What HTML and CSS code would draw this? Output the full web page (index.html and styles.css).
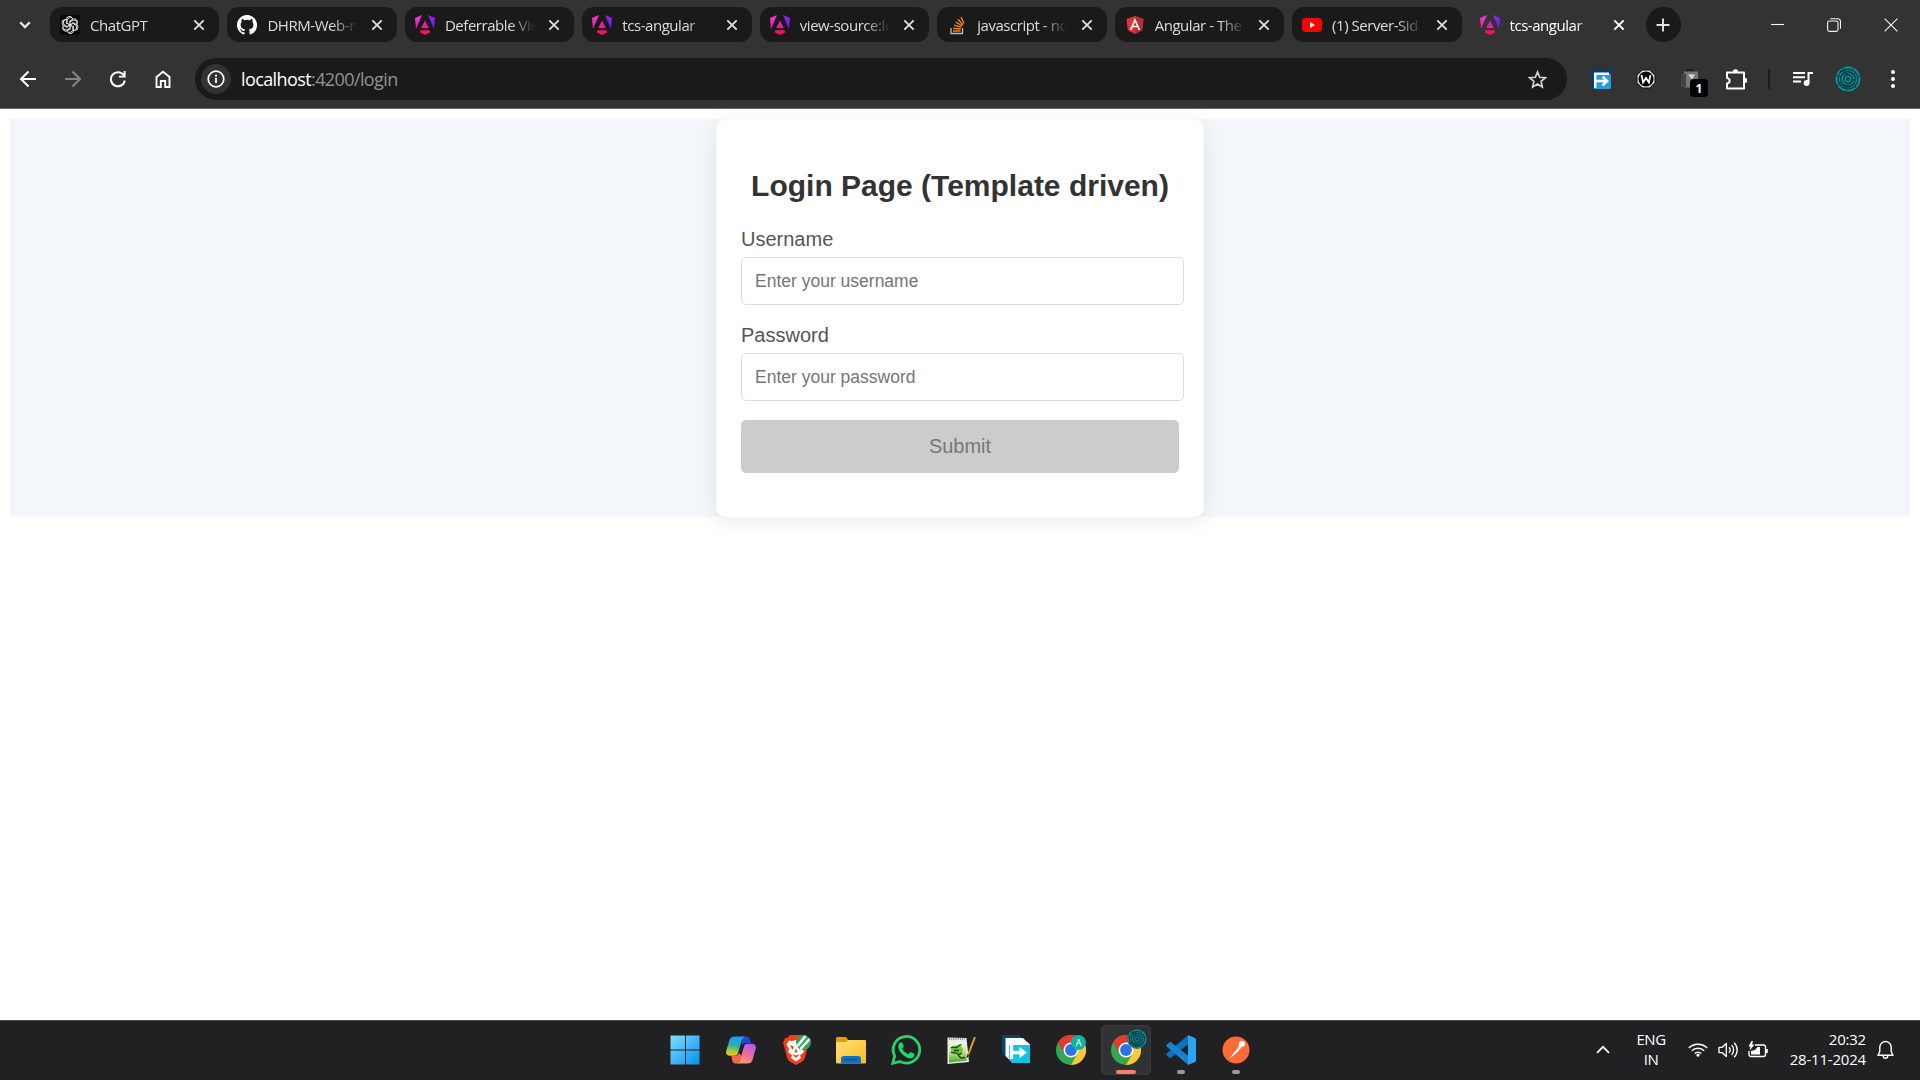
FILE: index.html
```html
<!DOCTYPE html>
<html lang="en">
<head>
<meta charset="utf-8">
<title>tcs-angular</title>
<link rel="stylesheet" href="styles.css">
</head>
<body>
<svg class="defs" aria-hidden="true">
  <defs>
    <linearGradient id="ngPink" x1="0" y1="0" x2="0" y2="1"><stop offset="0" stop-color="#f637d8"/><stop offset="1" stop-color="#e81a9c"/></linearGradient>
    <linearGradient id="ngViolet" x1="0" y1="0" x2="0" y2="1"><stop offset="0" stop-color="#8a2be8"/><stop offset="1" stop-color="#6e10ff"/></linearGradient>
    <linearGradient id="winBlue" x1="0" y1="0" x2="1" y2="1"><stop offset="0" stop-color="#7fe0fd"/><stop offset="1" stop-color="#0a8df0"/></linearGradient>
    <linearGradient id="coBlue" x1="0.4" y1="0" x2="0.2" y2="1"><stop offset="0" stop-color="#1f9df0"/><stop offset=".45" stop-color="#27b3a8"/><stop offset=".75" stop-color="#a8cc3a"/><stop offset="1" stop-color="#f3c41c"/></linearGradient>
    <linearGradient id="coPink" x1="0.8" y1="0" x2="0.3" y2="1"><stop offset="0" stop-color="#a85cf0"/><stop offset=".5" stop-color="#e86aa8"/><stop offset="1" stop-color="#ff9f5c"/></linearGradient>
    <linearGradient id="folder" x1="0" y1="0" x2="1" y2="1"><stop offset="0" stop-color="#ffe07a"/><stop offset="1" stop-color="#fbbd20"/></linearGradient>
    <linearGradient id="npp" x1="0" y1="0" x2="0" y2="1"><stop offset="0" stop-color="#f4f8e8"/><stop offset=".45" stop-color="#c8e8a0"/><stop offset="1" stop-color="#4fa827"/></linearGradient>
    <symbol id="angular" viewBox="0 0 20 20">
      <path d="M7 0 0 3l1 11z" fill="url(#ngPink)"/><path d="m13 0 7 3-1 11z" fill="url(#ngViolet)"/>
      <path d="m10 5.400 3.700 7.600h-2.200L10 10 8.500 13H6.300z" fill="#e520a5"/><path d="M7.500 10.500h5l1 2.500h-7z" fill="#e520a5"/>
      <path d="M5.500 15.200h9l.8 2L10 20l-5.300-2.800z" fill="#f8125c"/>
    </symbol>
    <symbol id="close" viewBox="0 0 12 12"><path d="m1.300 1.300 9.400 9.400m0-9.400-9.400 9.400" stroke="currentColor" stroke-width="1.900" fill="none"/></symbol>
    <symbol id="chrome" viewBox="0 0 30 30">
      <circle cx="15" cy="15" r="15" fill="#35a652"/>
      <path d="M2 7.500A15 15 0 0 1 28 7.500H15L8.500 18.800z" fill="#e23b2e"/>
      <path d="M28 7.500A15 15 0 0 1 15 30L21.500 18.700 15 7.500z" fill="#fcc934"/>
      <circle cx="15" cy="15" r="7.500" fill="#fff"/><circle cx="15" cy="15" r="5.900" fill="#2d73e8"/>
    </symbol>
    <symbol id="avatar" viewBox="0 0 26 26">
      <circle cx="13" cy="13" r="12.700" fill="#06464d"/>
      <g fill="none" stroke="#0f969f">
        <circle cx="13" cy="13" r="11.600" stroke-width="1.600" stroke-dasharray="9 1"/>
        <circle cx="13" cy="13" r="8.600" stroke-width="1.300" stroke="#0d8890" stroke-dasharray="5 1"/>
        <circle cx="13" cy="13" r="5.800" stroke-width="1.300"/>
        <circle cx="13" cy="13" r="2.600" stroke-width="1.100"/>
      </g>
      <path d="M5 5c6-1 12 1 15 6M5 18c4 3 11 1 14-5M7 9c3-2 7-2 9 1M8 21c4 1 8 0 11-3" fill="none" stroke="#04272c" stroke-width=".8"/>
    </symbol>
  </defs>
</svg>

<header class="browser">
  <div class="tabstrip">
    <button class="tab-search" aria-label="Search tabs"><svg width="12" height="8" viewBox="0 0 12 8"><path d="m1.200 1.300 4.800 4.800 4.800-4.800" stroke="#e8e8e8" stroke-width="2.300" fill="none"/></svg></button>
    <div class="tabs">
      <div class="tab">
        <svg class="favicon" viewBox="0 0 20 20"><rect width="20" height="20" rx="3" fill="#080808"/><g fill="none" stroke="#e0e0e0" stroke-width=".95"><path id="petal" d="M7.200 8.400V5.900a3.300 3.300 0 0 1 6-1.900M7.200 8.400l5.100 3M8.900 6.500 12.800 4.200a3.100 3.100 0 0 1 4.400 3.900"/><use href="#petal" transform="rotate(60 10 10)"/><use href="#petal" transform="rotate(120 10 10)"/><use href="#petal" transform="rotate(180 10 10)"/><use href="#petal" transform="rotate(240 10 10)"/><use href="#petal" transform="rotate(300 10 10)"/></g></svg>
        <span class="title">ChatGPT</span><svg class="x"><use href="#close"/></svg>
      </div>
      <div class="tab">
        <svg class="favicon" viewBox="0 0 16 16"><path fill="#fff" d="M8 0C3.580 0 0 3.580 0 8c0 3.540 2.290 6.530 5.470 7.590.4.070.55-.17.55-.38v-1.490c-2.010.37-2.530-.49-2.690-.94-.09-.23-.48-.94-.82-1.130-.28-.15-.68-.52-.01-.53.63-.01 1.080.58 1.230.82.72 1.210 1.870.87 2.330.66.07-.52.28-.87.51-1.070-1.780-.2-3.640-.89-3.640-3.950 0-.87.31-1.590.82-2.150-.08-.2-.36-1.020.08-2.120 0 0 .67-.21 2.200.82a7.700 7.700 0 0 1 4 0c1.530-1.040 2.200-.82 2.200-.82.44 1.100.16 1.920.08 2.120.51.56.82 1.270.82 2.150 0 3.070-1.870 3.750-3.650 3.950.29.25.54.73.54 1.480v2.200c0 .21.15.46.55.38A8 8 0 0 0 16 8c0-4.420-3.580-8-8-8z"/></svg>
        <span class="title">DHRM-Web-r</span><svg class="x"><use href="#close"/></svg>
      </div>
      <div class="tab"><svg class="favicon"><use href="#angular"/></svg><span class="title">Deferrable Vie</span><svg class="x"><use href="#close"/></svg></div>
      <div class="tab"><svg class="favicon"><use href="#angular"/></svg><span class="title">tcs-angular</span><svg class="x"><use href="#close"/></svg></div>
      <div class="tab"><svg class="favicon"><use href="#angular"/></svg><span class="title">view-source:lo</span><svg class="x"><use href="#close"/></svg></div>
      <div class="tab">
        <svg class="favicon" viewBox="0 0 20 20"><path d="M4 13v5.500h11.500V13" stroke="#b9bcc0" stroke-width="1.300" fill="none"/><path d="M6 16h7.500M6.200 13.200l7.500.8M7 10.200l7.200 2M8.700 7l6.400 3.800M11 4.200l5 5.700M14.100 2l2.900 6.500" stroke="#f48024" stroke-width="1.400" fill="none"/></svg>
        <span class="title">javascript - no</span><svg class="x"><use href="#close"/></svg>
      </div>
      <div class="tab">
        <svg class="favicon" viewBox="0 0 20 20"><path d="m10 1 8.500 3-1.300 11.200L10 19l-7.200-3.800L1.500 4z" fill="#e23237"/><path d="m10 1 8.500 3-1.300 11.200L10 19z" fill="#b52e31"/><path d="M10 3 4.700 15h2l1-2.700h4.600l1 2.700h2zm0 4 1.700 3.800H8.300z" fill="#fff"/></svg>
        <span class="title">Angular - The</span><svg class="x"><use href="#close"/></svg>
      </div>
      <div class="tab">
        <svg class="favicon" viewBox="0 0 20 20"><rect y="3" width="20" height="14" rx="3.500" fill="#f00"/><path d="m8 7 5 3-5 3z" fill="#fff"/></svg>
        <span class="title">(1) Server-Sid</span><svg class="x"><use href="#close"/></svg>
      </div>
      <div class="tab active"><svg class="favicon"><use href="#angular"/></svg><span class="title">tcs-angular</span><svg class="x"><use href="#close"/></svg></div>
    </div>
    <button class="new-tab" aria-label="New tab"><svg width="14" height="14" viewBox="0 0 14 14"><path d="M7 .5v13M.5 7h13" stroke="#e3e3e3" stroke-width="1.900"/></svg></button>
    <div class="window-controls">
      <svg width="13" height="13" viewBox="0 0 13 13"><path d="M0 6.500h13" stroke="#f4f4f4" stroke-width="1.100"/></svg>
      <svg width="14" height="14" viewBox="0 0 14 14" fill="none" stroke="#f4f4f4" stroke-width="1.100"><rect x=".6" y="3" width="10.400" height="10.400" rx="1.800"/><path d="M3.200 .7h7.300a3 3 0 0 1 3 3v7"/></svg>
      <svg width="14" height="14" viewBox="0 0 14 14"><path d="m.6.600 12.800 12.800m0-12.800L.6 13.400" stroke="#f4f4f4" stroke-width="1.100"/></svg>
    </div>
  </div>

  <div class="toolbar">
    <nav class="nav">
      <svg viewBox="0 0 18 18"><path d="M17 9H2m7.500-7.500L2 9l7.500 7.500" stroke="#fff" stroke-width="2" fill="none"/></svg>
      <svg viewBox="0 0 18 18"><path d="M1 9h15M8.500 1.500 16 9l-7.500 7.500" stroke="#858585" stroke-width="2" fill="none"/></svg>
      <svg viewBox="0 0 18 18"><path d="M14.900 5.600A7 7 0 1 0 15.800 10.500" stroke="#fff" stroke-width="2" fill="none"/><path d="M16.600.9v6.700H9.900V5.700h4.800V.9z" fill="#fff"/></svg>
      <svg viewBox="0 0 18 18"><path d="M2.500 6.900 9 1.700l6.500 5.200V17h-4.300v-6H6.800v6H2.500z" stroke="#fff" stroke-width="1.900" fill="none"/></svg>
    </nav>
    <div class="omnibox">
      <span class="site-info"><svg width="18" height="18" viewBox="0 0 18 18"><circle cx="9" cy="9" r="7.800" stroke="#fff" stroke-width="1.700" fill="none"/><path d="M9 8v5M9 4.800v1.900" stroke="#fff" stroke-width="1.800"/></svg></span>
      <span class="url"><b>localhost</b>:4200/login</span>
      <svg class="star" width="19" height="19" viewBox="0 0 19 19"><path d="m9.500 1.900 2.200 5.300 5.700.5-4.300 3.700 1.300 5.600-4.900-3-4.900 3 1.300-5.600L1.600 7.700l5.700-.5z" stroke="#d5d5d5" stroke-width="1.600" fill="none"/></svg>
    </div>
    <div class="extensions">
      <svg width="20" height="20" viewBox="0 0 20 20"><path d="M0 1.500A1.500 1.500 0 0 1 1.500 0H18.500A1.500 1.500 0 0 1 20 1.500V20H4l-4-2z" fill="#073a70"/><path d="M3 4h15l2 1.500v13a1.500 1.500 0 0 1-1.500 1.500H3z" fill="#259be0"/><path d="M4.200 19V4.700H18M4.200 12H14M11.500 7.700l4.600 4.300-4.600 4.300" stroke="#fff" stroke-width="2.500" fill="none"/></svg>
      <svg width="20" height="20" viewBox="0 0 20 20"><path d="m6.300 1h7.400L19 6.300v7.400L13.700 19H6.300L1 13.700V6.300z" fill="#e8e8e8" stroke="#080808"/><circle cx="10" cy="10" r="7.600" fill="#070707"/><path d="m5.500 6 1.600 7.500L10 9l2.900 4.500L14.500 6" stroke="#fff" stroke-width="1.800" fill="none"/></svg>
      <div class="badged">
        <svg width="19" height="20" viewBox="0 0 19 20"><path d="M6 3V1h6v2" stroke="#1c1c1c" stroke-width="1.400" fill="none"/><rect x="3" y="2.500" width="14" height="16" fill="#777"/><rect y="5" width="5" height="13" fill="#444"/><path d="M7 5.500h7l-3 5z" fill="#ddd"/></svg>
        <span class="badge">1</span>
      </div>
      <svg width="22" height="22" viewBox="0 0 22 22"><path d="M2 4.500h17v16H2v-5c3.500-.5 3.500-5 0-5.500z" stroke="#fff" stroke-width="2" stroke-linejoin="round" fill="none"/><path d="M7.800 4a2.700 2.700 0 0 1 5.400 0zM19.500 9.800a2.700 2.700 0 0 1 0 5.400z" fill="#fff"/></svg>
    </div>
    <i class="divider"></i>
    <div class="profile">
      <svg width="20" height="16" viewBox="0 0 20 16"><path d="M0 2h12M0 6.300h12M0 10.600h8" stroke="#fff" stroke-width="2"/><path d="M20 2h-4.500v9.500" stroke="#fff" stroke-width="2" fill="none"/><circle cx="13.600" cy="12" r="2.900" fill="#fff"/></svg>
      <svg width="26" height="26"><use href="#avatar"/></svg>
      <svg width="4" height="18" viewBox="0 0 4 18" fill="#fff"><circle cx="2" cy="2" r="2"/><circle cx="2" cy="9" r="2"/><circle cx="2" cy="16" r="2"/></svg>
    </div>
  </div>
</header>

<main class="page">
  <section class="login-bg">
    <form class="card">
      <h2>Login Page (Template driven)</h2>
      <div class="field"><label for="user">Username</label><input id="user" type="text" placeholder="Enter your username"></div>
      <div class="field"><label for="pass">Password</label><input id="pass" type="password" placeholder="Enter your password"></div>
      <button class="submit" type="submit" disabled>Submit</button>
    </form>
  </section>
</main>

<footer class="taskbar">
  <div class="apps">
    <div class="app"><svg viewBox="0 0 30 30"><path d="M.5.500H15v14H.5zM16 .5h13.500v14H16zM.5 15.500H15v14H.5zM16 15.500h13.500v14H16z" fill="url(#winBlue)"/></svg></div>
    <div class="app"><svg viewBox="0 0 30 30"><path d="M16 1.500h4.500c2 0 3 1.500 3.600 4L25 8h-5c-2.500 0-3.500 1-4 3z" fill="#2148cf"/><path d="M9 1.500h10c-2.500 1-3 3-3.800 6L12 18c-.7 2-1.500 2.700-3.500 2.700H4c-3 0-4.500-2-3.700-5L3.500 5C4.300 2.500 6 1.500 9 1.500z" fill="url(#coBlue)"/><path d="M21 28.500H11c2.500-1 3-3 3.800-6L18 11.500c.7-2 1.500-2.700 3.500-2.700H26c3 0 4.500 2 3.700 5L26.500 25c-.8 2.500-2.500 3.500-5.500 3.500z" fill="url(#coPink)"/><path d="M13 28.500H9.500c-2 0-3-1.500-3.500-4l-.7-3.800h4c2.200 0 3-1 3.700-3l2.400 3-.7 3c-.5 2.500-.7 3.800-1.700 4.800z" fill="#f4644e"/></svg></div>
    <div class="app"><svg viewBox="0 0 30 30"><path d="M9 0h12l2.500 2.700L26 3l2 5-1.200 3.500-3 11.500c-.5 1.700-1.500 2.700-3 3.800L15 30l-5.800-3.200c-1.500-1.100-2.500-2.100-3-3.800l-3-11.500L2 8l2-5 2.500-.3z" fill="#f83c13"/><path d="m15 5 4 1 3-.5 2.500 4-2.500 4.500 1 3-4 3.500 1 2.500-5 3.500-5-3.500 1-2.500L7 17l1-3-2.500-4.500 2.500-4L11 6z" fill="#fff"/><path d="m9 10 3.800 1.500L11.500 15zM21 10l-3.800 1.500 1.300 3.500zM15 13l1.500 4.500h-3zM11 19l4 1.500 4-1.500-4 4z" fill="#f83c13"/><circle cx="22.500" cy="7.500" r="7.500" fill="#32a35f"/><path d="m16.500 11 8-10M19.500 14l9-10" stroke="#fff" stroke-width="2.600"/></svg></div>
    <div class="app"><svg viewBox="0 0 30 30"><path d="M0 9V3.500C0 2.600.6 2 1.500 2H9c1.500 0 2 .7 3 3h16.500c.9 0 1.500.6 1.500 1.500V12H0z" fill="#dea000"/><path d="M0 8.500C0 7.500.6 7 1.500 7h8L12 5h16.500c.9 0 1.500.6 1.500 1.500V27c0 1-.5 1.500-1.500 1.500h-27C.5 28.500 0 28 0 27z" fill="url(#folder)"/><path d="M5 28.500V24a3 3 0 0 1 3-3h14a3 3 0 0 1 3 3v4.500z" fill="#1272c2"/><path d="M8.500 24.700h13" stroke="#094c91" stroke-width="1.200"/></svg></div>
    <div class="app"><svg viewBox="0 0 30 30"><path d="m1.700 28.300 2-7.300A13.300 13.300 0 1 1 9 26.400z" fill="none" stroke="#25d366" stroke-width="2.800"/><path d="M10.200 7.300c.8 0 1.100.2 1.400.9l1.100 2.700c.2.500 0 1-.5 1.500l-1 1.200c1.500 2.800 3.500 4.500 6.200 5.700l1.400-1.700c.4-.5.8-.5 1.300-.3l2.800 1.300c.6.300.8.500.7 1.200-.2 2.500-2.300 3.800-4.400 3.700-5.600-.5-11.700-6.700-12-11.400-.1-2.400 1.300-4.700 3-4.800z" fill="#25d366"/></svg></div>
    <div class="app"><svg viewBox="0 0 30 30"><path d="M1.500 2.500 20.500 3l2.500 24-21.500 2z" fill="#e9ebe7"/><path d="m3 7 16.500-.5L21 25.800 3 27.500z" fill="url(#npp)"/><path d="M3 4h16" stroke="#777" stroke-width="1.600" stroke-dasharray="1 1.200"/><ellipse cx="11" cy="15" rx="6" ry="4.500" fill="#6cc93a"/><path d="M5 13c2-2 3 0 5-.5s3-3 5.500-2.500M5 17c2 2 5 0 6 1.500s3 1 5-.5M8 15.500h5M12 20l3 3 4-.5" stroke="#263d1c" stroke-width="1.300" fill="none"/><path d="m29 2-7 18" stroke="#e49b24" stroke-width="2"/><path d="m22.200 19.500-1.200 3" stroke="#222" stroke-width="1.400"/></svg></div>
    <div class="app"><svg viewBox="0 0 30 30"><path d="M1 0h17l4.500 4H5v18l-4-4z" fill="#0a416d"/><path d="M4.500 3H22l7 7v18H11.500l-7-7z" fill="#f4fcff"/><path d="M8 10h21v18H12l-4-3.500z" fill="#10c5e3"/><path d="M8 10h21v-.3l-2.700-2.700H8z" fill="#fff"/><path d="M10.500 10v14M10.500 17.500h10" stroke="#fff" stroke-width="3.300" fill="none"/><path d="m18.500 12 7.500 5.500-7.500 5.500z" fill="#fff"/></svg></div>
    <div class="app"><svg viewBox="0 0 30 30"><use href="#chrome"/></svg><span class="letter">A</span></div>
    <div class="app current"><svg viewBox="0 0 30 30"><use href="#chrome"/></svg><svg class="mini"><use href="#avatar"/></svg></div>
    <div class="app running"><svg viewBox="0 0 30 30"><path d="m22 .2 1 8.200L5 22.700c-.5.400-1 .4-1.500 0L.6 20.200c-.6-.5-.6-1.200 0-1.700z" fill="#0d72bd"/><path d="M22 29.800 23 21.600 5 7.300c-.5-.4-1-.4-1.500 0L.6 9.800c-.6.500-.6 1.200 0 1.700z" fill="#1583cf"/><path d="m22 0 7 3c.6.300 1 .8 1 1.500v21c0 .7-.4 1.200-1 1.500l-7 3z" fill="#2aa3f0"/></svg></div>
    <div class="app running"><svg viewBox="0 0 30 30"><circle cx="15" cy="15" r="13.500" fill="#ff6c37"/><circle cx="21" cy="8.700" r="3" fill="#fff"/><path d="m18.500 9.500 2.300 2.500-5.800 6.500-7 5.500 5.500-7z" fill="#fff"/><path d="m11 18.500 7-6.500" stroke="#f0875f" stroke-width="1"/></svg></div>
  </div>
  <div class="tray">
    <svg class="caret" width="14" height="9" viewBox="0 0 14 9"><path d="m1 7.800 6-6 6 6" stroke="#fff" stroke-width="1.700" fill="none"/></svg>
    <div class="lang">ENG<br>IN</div>
    <div class="status">
      <svg width="20" height="15" viewBox="0 0 20 15"><path d="M.8 6a12.900 12.900 0 0 1 18.400 0M3.800 8.800a8.800 8.800 0 0 1 12.400 0M6.700 11.500a4.700 4.700 0 0 1 6.600 0" stroke="#fff" stroke-width="1.500" fill="none"/><circle cx="10" cy="13.100" r="1.700" fill="#fff"/></svg>
      <svg width="20" height="18" viewBox="0 0 20 18" stroke="#fff" stroke-width="1.300" fill="none"><path d="M1 6.300h3.200L8.300 2.500v13L4.200 11.700H1z" stroke-linejoin="round"/><path d="M11 6.300a4 4 0 0 1 0 5.400M13.600 4a7.300 7.300 0 0 1 0 10M16.200 1.700a10.500 10.500 0 0 1 0 14.600"/></svg>
      <svg width="20" height="18" viewBox="0 0 20 18"><path d="M7 4h8.500a2 2 0 0 1 2 2v7.500a2 2 0 0 1-2 2H3a2 2 0 0 1-2-2V10" stroke="#fff" stroke-width="1.400" fill="none"/><path d="M18 8h1.800v4H18zM3 13.600V10l4-1 2.500-3H12v7.600zM3.500 0 .5 5.500h2L1.700 9.500l4.800-6H4L5 0z" fill="#fff"/></svg>
    </div>
    <div class="clock">20:32<br>28-11-2024</div>
    <svg class="bell" width="17" height="20" viewBox="0 0 17 20"><path d="M8.500 1.500a5.700 5.700 0 0 0-5.700 5.700v4.300L1 15.300h15l-1.800-3.800V7.200a5.700 5.700 0 0 0-5.700-5.700zM6.300 16a2.200 2.200 0 0 0 4.400 0" stroke="#fff" stroke-width="1.400" stroke-linejoin="round" fill="none"/></svg>
  </div>
</footer>
</body>
</html>
```
FILE: styles.css
```css
* { box-sizing: border-box; }
body {
  margin: 0;
  height: 1080px;
  display: flex;
  flex-direction: column;
  overflow: hidden;
  background: #fff;
  font-family: "Liberation Sans", Arial, sans-serif;
}
.defs { position: absolute; width: 0; height: 0; }
svg { display: block; flex: none; }
button { border: 0; padding: 0; font: inherit; }

/* Browser chrome */
.browser {
  height: 109px;
  flex: none;
  background: #333;
  border-bottom: 1px solid #6a6868;
  font-family: "Open Sans", "Noto Sans", sans-serif;
}
.tabstrip { display: flex; height: 50px; padding-top: 7px; }
.tab-search { width: 50px; height: 35px; background: none; display: flex; align-items: center; justify-content: center; }
.tabs { display: flex; gap: 8px; }
.tab {
  width: 169.450px;
  height: 35px;
  padding: 0 14px 0 10px;
  display: flex;
  align-items: center;
  border-radius: 12px;
  background: #1a1a1a;
  color: #dcdcdc;
}
.favicon { width: 20px; height: 20px; margin-right: 10px; }
.title {
  width: 90px;
  white-space: nowrap;
  font-size: 15px;
  letter-spacing: -0.450px;
  line-height: 24px;
  -webkit-mask-image: linear-gradient(90deg, #000 72%, transparent);
  mask-image: linear-gradient(90deg, #000 72%, transparent);
}
.x { width: 12px; height: 12px; margin-left: auto; color: #dedede; }
.tab.active { background: none; color: #fff; }
.active .x { color: #fff; }
.new-tab {
  width: 35px;
  height: 35px;
  margin-left: 7px;
  border-radius: 50%;
  background: #1a1a1a;
  display: flex;
  align-items: center;
  justify-content: center;
}
.window-controls { display: flex; align-items: center; height: 35px; gap: 43px; margin: 0 22px 0 auto; }

.toolbar { display: flex; align-items: center; height: 58px; }
.nav { display: flex; gap: 27px; width: 195px; padding-left: 18.500px; }
.nav svg { width: 18px; height: 18px; }
.omnibox {
  width: 1372px;
  height: 42px;
  padding: 0 20px 0 6px;
  display: flex;
  align-items: center;
  border-radius: 21px;
  background: #1a1a1a;
}
.site-info {
  width: 30px;
  height: 30px;
  border-radius: 50%;
  background: #333;
  display: flex;
  align-items: center;
  justify-content: center;
}
.url { margin-left: 10px; font-size: 18px; letter-spacing: -0.600px; color: #929292; }
.url b { font-weight: 400; color: #fff; }
.star { margin-left: auto; }
.extensions { display: flex; align-items: center; gap: 25px; margin-left: 24px; }
.badged { position: relative; }
.badge {
  position: absolute;
  left: 9px;
  top: 10px;
  width: 18px;
  height: 18px;
  border-radius: 4px;
  background: #000;
  color: #fff;
  font-size: 12px;
  font-weight: 700;
  line-height: 19px;
  text-align: center;
}
.divider { width: 2px; height: 20px; margin-left: 21px; background: #1c1c1c; }
.profile { display: flex; align-items: center; gap: 31px; margin: 0 25px 0 auto; }
.profile svg:nth-child(2) { margin: 0 -1px 0 -9px; }

/* Login page */
.page { flex: 1; padding: 10px; }
.login-bg { height: 398px; display: flex; justify-content: center; background: #f3f7fc; }
.card {
  width: 488px;
  padding: 48px 25px 0;
  border-radius: 10px;
  background: #fff;
  box-shadow: 0 5px 19px rgba(0, 0, 0, .08);
}
.card h2 { margin: 0 0 19px; font-size: 30px; line-height: 38px; text-align: center; color: #333; }
.field { height: 96px; }
.field label { display: block; height: 33px; font-size: 20px; line-height: 31px; color: #555; }
.field input {
  display: block;
  width: 443px;
  height: 48px;
  padding: 0 13px;
  border: 1px solid #ddd;
  border-radius: 5px;
  background: #fff;
  font: 17.500px "Liberation Sans", Arial, sans-serif;
}
.field input::placeholder { color: #757575; }
.submit { display: block; width: 438px; height: 53px; margin-top: 4px; border-radius: 5px; background: #ccc; color: #777; font-size: 20px; }

/* Taskbar */
.taskbar {
  height: 60px;
  flex: none;
  display: flex;
  justify-content: space-between;
  padding-bottom: 2px;
  background: #212124;
  border-top: 1px solid #48494b;
  color: #fff;
  font-family: "Open Sans", "Noto Sans", sans-serif;
}
.apps { display: flex; align-items: center; gap: 5px; margin-left: 659.500px; }
.app { position: relative; width: 50px; height: 50px; display: flex; align-items: center; justify-content: center; border-radius: 5px; }
.app:nth-child(2) { margin-left: 1.500px; }
.app > svg { width: 30px; height: 30px; }
.current { background: #323235; box-shadow: inset 0 0 0 1px #3a3a3d; }
.current::after, .running::after {
  content: "";
  position: absolute;
  bottom: 1px;
  left: 15px;
  width: 20px;
  height: 4px;
  border-radius: 2px;
  background: #f4826a;
}
.running::after { left: 21px; width: 8px; background: #9b9b9d; }
.app > .mini { position: absolute; left: 26px; top: 4px; width: 20px; height: 20px; }
.letter {
  position: absolute;
  left: 25px;
  top: 10px;
  width: 15px;
  height: 15px;
  border-radius: 50%;
  background: #10b5a0;
  font-size: 9px;
  line-height: 15px;
  text-align: center;
}
.tray { display: flex; align-items: center; font-size: 15px; line-height: 20px; letter-spacing: -0.200px; padding-right: 26px; }
.lang, .clock { padding-bottom: 2px; }
.lang { width: 50px; margin-left: 16px; text-align: center; letter-spacing: -0.450px; }
.status { display: flex; align-items: center; gap: 10px; margin-left: 12px; }
.clock { width: 90px; margin-left: 8px; text-align: right; }
.bell { margin-left: 11px; }
```
